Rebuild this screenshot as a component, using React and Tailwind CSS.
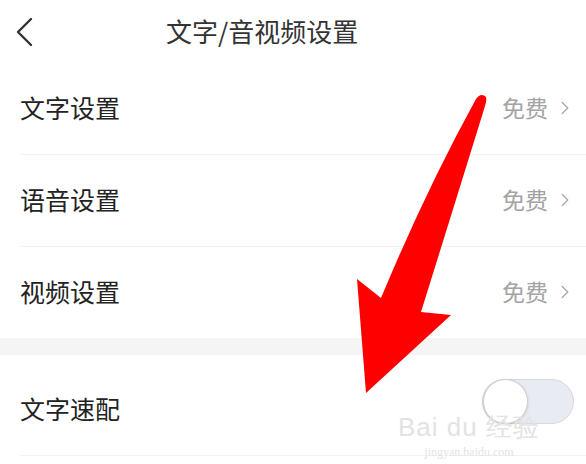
import { ChevronRight } from 'lucide-react';

const rows = ['文字设置', '语音设置', '视频设置'];

export default function App() {
    return (
        <div className="relative w-[586px] h-[464px] overflow-hidden bg-white font-['Noto_Sans_CJK_SC',sans-serif] text-[#222]">
            {/* header */}
            <div className="relative h-[63px] flex items-center pl-[166px]">
                <svg className="absolute left-[14px] top-[17px]" width="20" height="30" viewBox="0 0 20 30">
                    <path d="M17 2 L4 15 L17 28" fill="none" stroke="#333" strokeWidth="2.4" strokeLinecap="round" strokeLinejoin="round" />
                </svg>
                <h1 className="text-[26px] text-[#333] mt-[-2px]">文字/音视频设置</h1>
            </div>

            {rows.map((r, i) => (
                <div key={r} className="flex flex-col pl-[20px]">
                    <div className="h-[91px] flex items-center justify-between pr-[10px]">
                        <span className="text-[25px] leading-none mt-[-2px]">{r}</span>
                        <div className="flex items-center gap-[6px] text-[#a3a3a3] mt-[-2px]">
                            <span className="text-[23px] leading-none">免费</span>
                            <ChevronRight size={22} strokeWidth={1.5} className="text-[#aaa]" />
                        </div>
                    </div>
                    {i < 2 && <div className="h-[1px] bg-[#f2f2f2]" />}
                </div>
            ))}

            <div className="h-[17px] bg-[#f5f5f5]" />

            <div className="flex flex-col pl-[20px]">
                <div className="h-[100px] flex items-center justify-between pr-[12px] pt-[6px]">
                    <span className="text-[25px] leading-none">文字速配</span>
                    <div className="w-[92px] h-[45px] rounded-full bg-[#e8ebf2] border border-[#d5d8e0] flex items-center mt-[-14px]">
                        <div className="w-[45px] h-[45px] rounded-full bg-white border border-[#cfcfcf] shadow-[0_1px_3px_rgba(0,0,0,0.15)]" />
                    </div>
                </div>
                <div className="h-[1px] bg-[#f2f2f2]" />
            </div>

            {/* watermark */}
            <div className="absolute left-[398px] top-[414px] flex flex-col items-center text-[#e3e3e3] pointer-events-none">
                <span className="text-[26px] leading-none font-['Liberation_Sans',sans-serif] tracking-[1px]">Bai du 经验</span>
                <span className="text-[12px] leading-none mt-[6px] font-['Liberation_Serif',serif]">jingyan.baidu.com</span>
            </div>

            {/* red arrow annotation */}
            <svg className="absolute left-0 top-0 pointer-events-none" width="586" height="464" viewBox="0 0 586 464">
                <path
                    d="M476 99 Q481 92 486 97 Q487 100 485 106 Q456 200 421 312 L451 315 L366 393 L357 279 L381 298 Q426 190 476 99 Z"
                    fill="#ff0000"
                />
            </svg>
        </div>
    );
}
